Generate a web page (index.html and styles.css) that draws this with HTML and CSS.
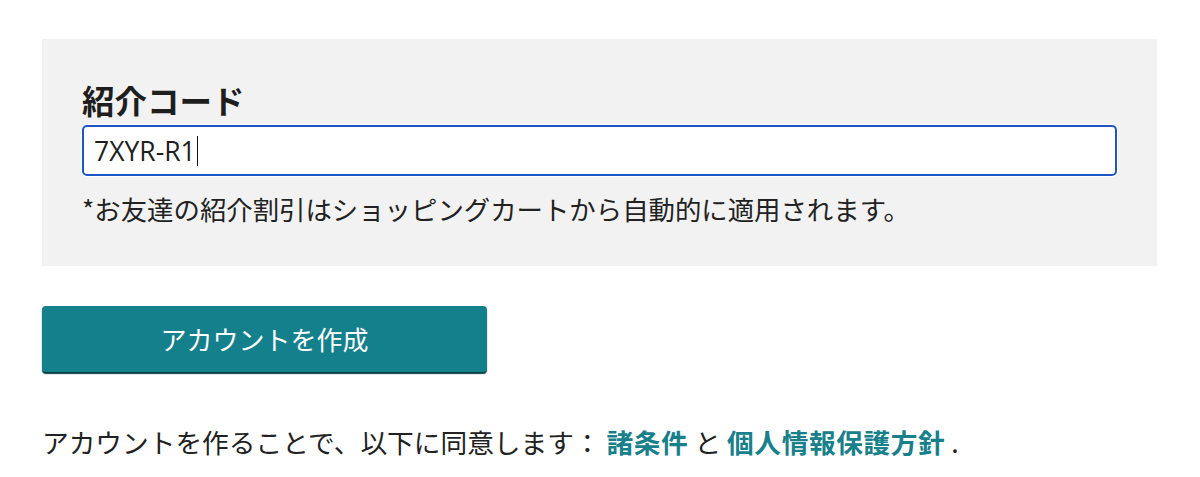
FILE: index.html
```html
<!DOCTYPE html>
<html lang="ja">
<head>
<meta charset="utf-8">
<title>紹介コード</title>
<link rel="stylesheet" href="styles.css">
</head>
<body>
<div class="page">
  <section class="referral">
    <div class="referral-label">紹介コード</div>
    <div class="referral-input"><span class="referral-value">7XYR-R1</span><span class="caret"></span></div>
    <p class="referral-note">*お友達の紹介割引はショッピングカートから自動的に適用されます。</p>
  </section>
  <button class="create-btn" type="button">アカウントを作成</button>
  <p class="terms">アカウントを作ることで、以下に同意します： <a class="terms-link" href="#">諸条件</a> と <a class="terms-link" href="#">個人情報保護方針</a> .</p>
</div>
</body>
</html>
```

FILE: styles.css
```css
html, body {
  margin: 0;
  padding: 0;
  background: #ffffff;
}

body {
  font-family: "Noto Sans CJK JP", "Noto Sans", sans-serif;
  color: #222222;
}

.page {
  padding: 39px 43px 0 42px;
}

.referral {
  background: #f2f2f2;
  padding: 40px 40px 42px 40px;
}

.referral-label {
  font-size: 32.5px;
  line-height: 42px;
  font-weight: 700;
  color: #1e1e1e;
}

.referral-input {
  margin-top: 4px;
  box-sizing: border-box;
  height: 51px;
  background: #ffffff;
  border: 2px solid #1f56c6;
  border-radius: 5px;
  box-shadow: 0 0 0 1px #ffffff;
  display: flex;
  align-items: center;
  padding-left: 10px;
}

.referral-value {
  font-family: "Open Sans", "Noto Sans", sans-serif;
  font-size: 26.5px;
  color: #1e1e1e;
}

.caret {
  display: inline-block;
  width: 1.5px;
  height: 30px;
  background: #111111;
  margin-left: 1px;
}

.referral-note {
  margin: 18px 0 0 0;
  font-size: 26.4px;
  line-height: 30px;
  color: #222222;
}

.create-btn {
  display: block;
  margin-top: 40px;
  width: 445px;
  height: 66px;
  box-sizing: border-box;
  border: none;
  border-radius: 4px;
  background: #13808c;
  box-shadow: 0 2px 1px #0a3f45;
  color: #ffffff;
  font-family: "Noto Sans CJK JP", "Noto Sans", sans-serif;
  font-size: 26px;
  padding: 0 0 2px 0;
  cursor: pointer;
}

.terms {
  margin: 52px 0 0 0;
  font-size: 26.7px;
  line-height: 36px;
  color: #222222;
}

.terms-link {
  color: #17808b;
  font-weight: 700;
  text-decoration: none;
  letter-spacing: 0.6px;
}
```
